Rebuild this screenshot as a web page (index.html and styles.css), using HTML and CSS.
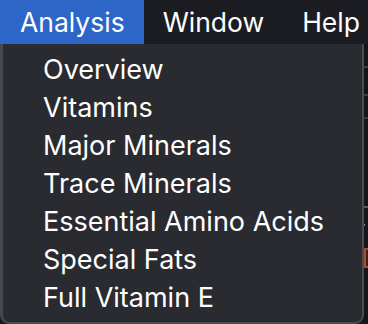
FILE: index.html
```html
<!DOCTYPE html>
<html>
<head>
<meta charset="utf-8">
<link rel="stylesheet" href="styles.css">
</head>
<body>
<div class="menubar">
  <div class="mb-item active">Analysis</div>
  <div class="mb-item">Window</div>
  <div class="mb-item">Help</div>
</div>
<div class="backdrop">
  <span class="bd-line l1"></span>
  <span class="bd-line l2"></span>
  <span class="bd-line l3"></span>
  <span class="bd-line l4"></span>
  <span class="bd-r">r</span>
  <span class="bd-e">E</span>
</div>
<div class="dropdown">
  <div class="dd-item">Overview</div>
  <div class="dd-item">Vitamins</div>
  <div class="dd-item">Major Minerals</div>
  <div class="dd-item">Trace Minerals</div>
  <div class="dd-item">Essential Amino Acids</div>
  <div class="dd-item">Special Fats</div>
  <div class="dd-item">Full Vitamin E</div>
</div>
</body>
</html>
```

FILE: styles.css
```css
html, body {
  margin: 0;
  padding: 0;
}
body {
  width: 368px;
  height: 324px;
  overflow: hidden;
  background: #17181c;
  font-family: Inter, "Noto Sans", "Liberation Sans", sans-serif;
  color: #ffffff;
  position: relative;
}
.menubar {
  display: flex;
  height: 44px;
  background: #1c1d22;
  font-size: 26.5px;
  font-weight: 400;
  line-height: 44px;
}
.mb-item {
  padding: 0 19px 0 19px;
  white-space: nowrap;
}
.mb-item.active {
  background: #2d65c8;
  width: 144px;
  box-sizing: border-box;
  padding-left: 20px;
}
.backdrop {
  position: absolute;
  left: 364px;
  top: 44px;
  width: 4px;
  height: 280px;
  background: #141519;
  overflow: hidden;
}
.bd-line {
  position: absolute;
  left: 0;
  width: 4px;
  height: 2px;
  background: #3b3c42;
}
.l1 { top: 22px; }
.l2 { top: 50px; }
.l3 { top: 73px; }
.l4 { top: 162px; background: #55565c; }
.bd-r {
  position: absolute;
  left: -6px;
  top: 174px;
  font-size: 20px;
  line-height: 20px;
  color: #4a9cc4;
}
.bd-e {
  position: absolute;
  left: 0;
  top: 204px;
  width: 14px;
  height: 20px;
  box-sizing: border-box;
  border: 2px solid #b04a33;
  background: #3a1d18;
  color: #d0604a;
  font-size: 14px;
  line-height: 16px;
  text-align: center;
}
.dropdown {
  position: absolute;
  left: 0;
  top: 44px;
  width: 364px;
  height: 280px;
  box-sizing: border-box;
  background: #2a2b30;
  border-left: 3px solid #47484d;
  border-right: 2px solid #4a4b50;
  border-bottom: 2px solid #4a4b50;
  border-radius: 0 0 9px 9px;
  padding-top: 7px;
  font-size: 27px;
  font-weight: 400;
}
.dd-item {
  height: 38px;
  line-height: 38px;
  padding-left: 40px;
  white-space: nowrap;
}
```
